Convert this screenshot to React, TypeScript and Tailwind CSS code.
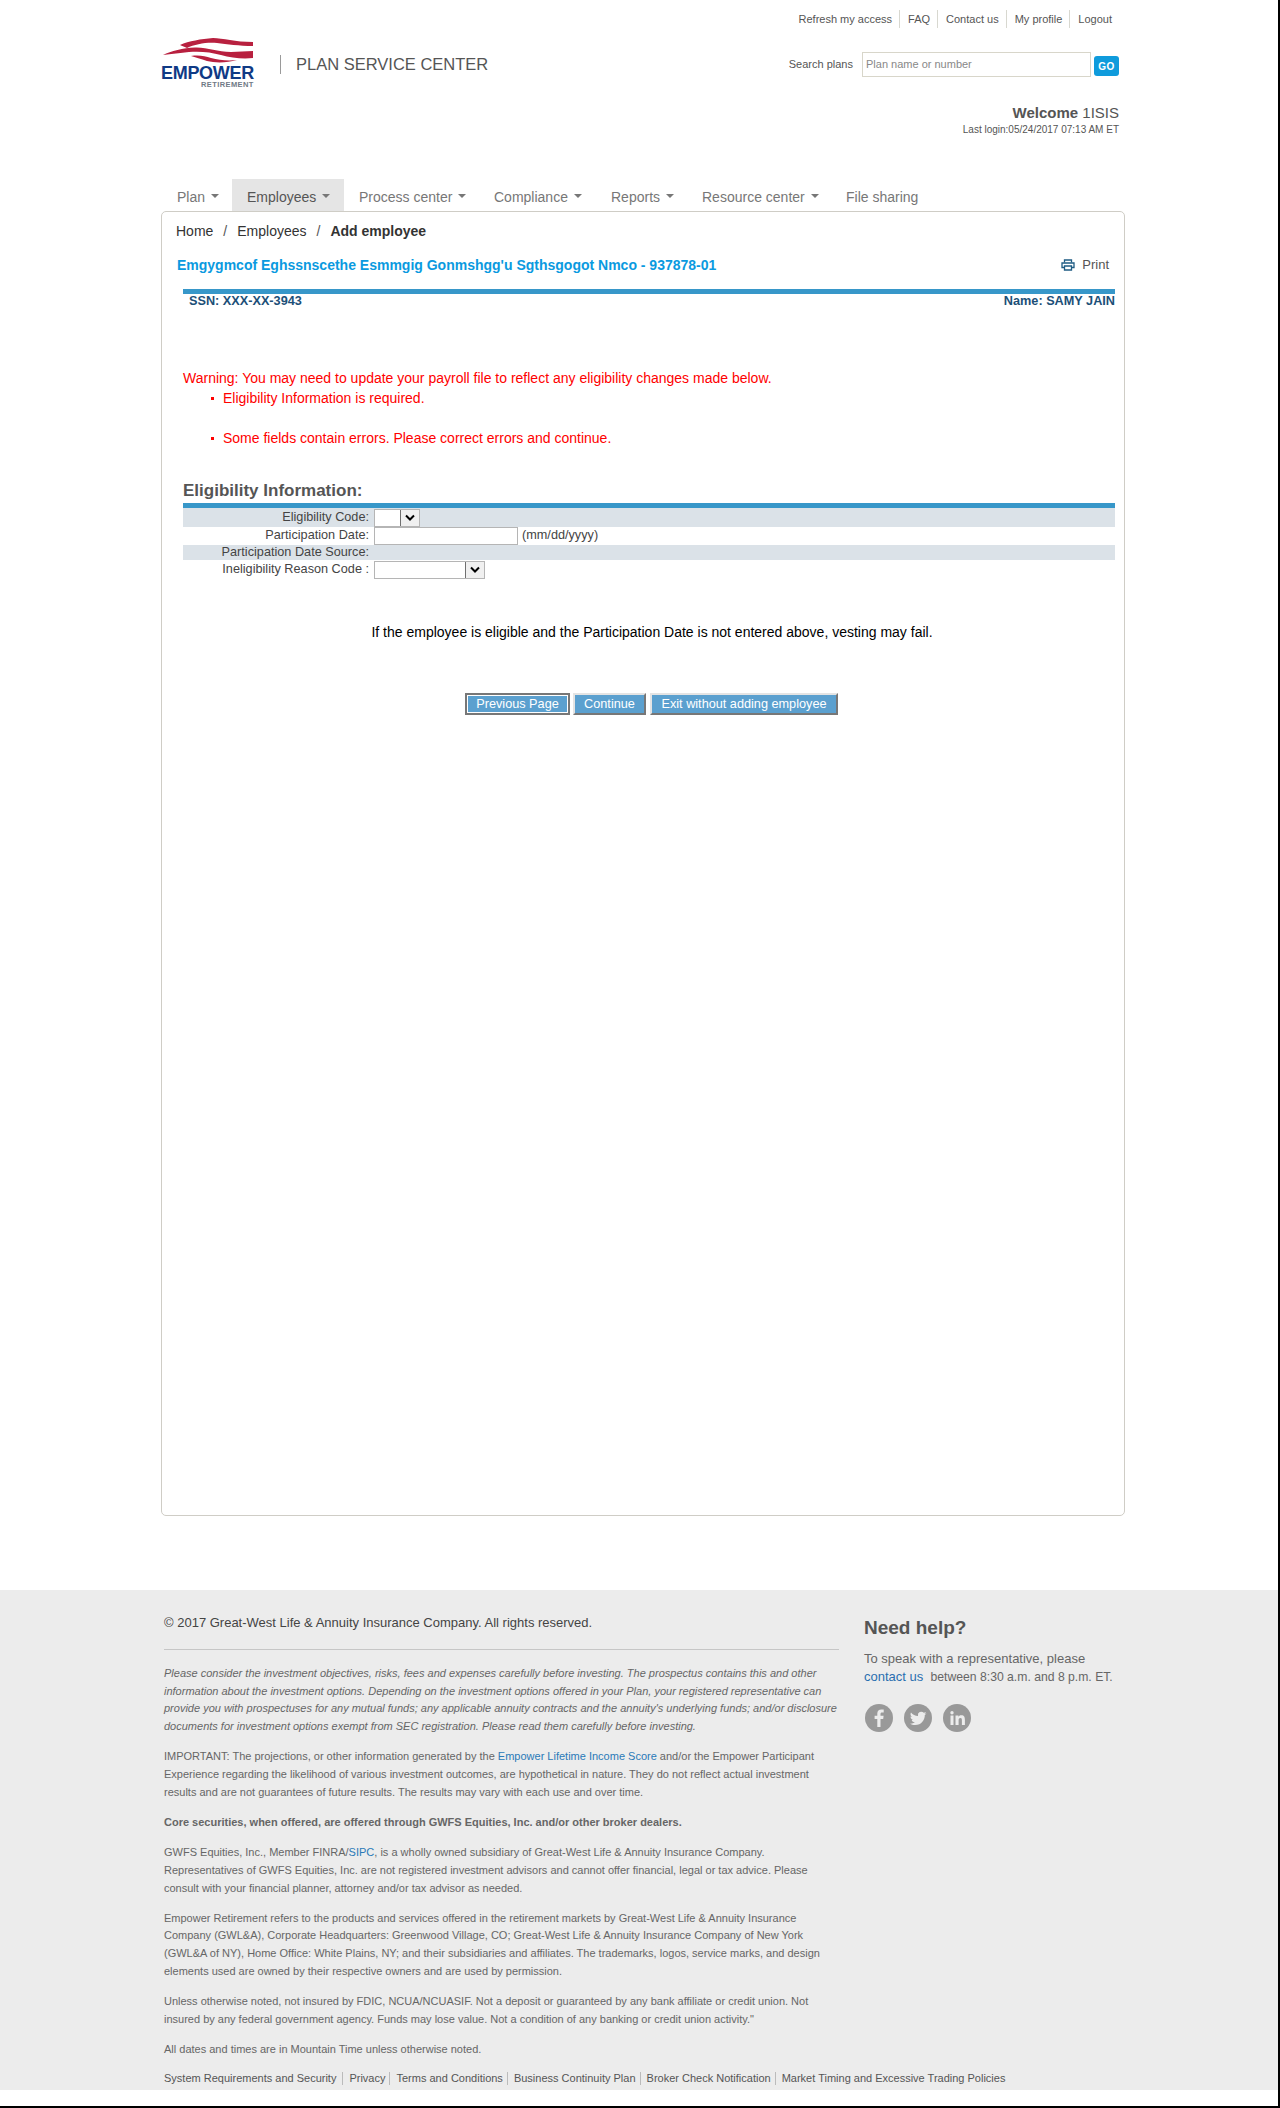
const nav = [
  { label: "Plan", caret: true, w: "w-[70px]" },
  { label: "Employees", caret: true, w: "w-[112px]", active: true },
  { label: "Process center", caret: true, w: "w-[135px]" },
  { label: "Compliance", caret: true, w: "w-[117px]" },
  { label: "Reports", caret: true, w: "w-[91px]" },
  { label: "Resource center", caret: true, w: "w-[144px]" },
  { label: "File sharing", caret: false, w: "w-[100px]" },
];

const footerLinks = [
  "Privacy",
  "Terms and Conditions",
  "Business Continuity Plan",
  "Broker Check Notification",
  "Market Timing and Excessive Trading Policies",
];

const Logo = () => (
  <div className="relative w-[100px] h-[52px] shrink-0">
    <svg width="100" height="26" viewBox="0 0 100 26" className="absolute left-0 top-0">
      <path d="M19 7 C28 3 40 1 52 0 C62 0 74 4 92 4 L92 8 C78 8 66 6 56 5 C46 4 34 6 26 10 C24 9 21 8 19 7 Z" fill="#b8203f" />
      <path d="M2 17 C10 13 22 10 34 9.500 C46 9 56 14 70 14 L92 13 L92 20 C82 21 70 20 60 17 C50 14 38 13 28 14 C20 15 10 16 2 17 Z" fill="#b8203f" />
      <path d="M30 18 C38 17 44 18 50 20 C58 22 66 23 76 22 C66 25 54 25 46 23 C40 21 34 19 30 18 Z" fill="#b8203f" />
    </svg>
    <div className="absolute left-0 top-[25px] text-[#0f3a85] text-[18px] leading-[20px] font-bold tracking-[-0.3px]">
      EMPOWER
    </div>
    <div className="absolute left-[40px] top-[42px] text-[#6f7a86] text-[7.500px] leading-[9px] font-bold tracking-[0.4px] whitespace-nowrap">
      RETIREMENT
    </div>
  </div>
);

const PrinterIcon = () => (
  <svg width="14" height="12" viewBox="0 0 14 12" fill="none" stroke="#1f5c84" strokeWidth="1.3">
    <path d="M3.5 3.500V1h7v2.500" />
    <path d="M3 8.500H1V4h12v4.500h-2" />
    <path d="M3.500 7h7v4h-7z" />
  </svg>
);

const Arrow = () => (
  <svg width="12" height="8" viewBox="0 0 12 8" fill="none" stroke="#000" strokeWidth="2">
    <path d="M2 1.500l4 4 4-4" />
  </svg>
);

const Select = ({ w }: { w: string }) => (
  <div className={`${w} h-[18px] border border-[#b5b5b5] bg-white flex justify-end`}>
    <div className="w-[19px] h-[16px] bg-[#f0f0f0] border-l border-[#707070] flex items-center justify-center">
      <Arrow />
    </div>
  </div>
);

const Social = ({ d }: { d: string }) => (
  <svg width="28" height="28" viewBox="0 0 28 28">
    <circle cx="14" cy="14" r="14" fill="#999999" />
    <path d={d} fill="#ececec" />
  </svg>
);

const btn =
  "h-[22px] bg-[#5ba0cf] text-white text-[12.700px] leading-[18px] border-2 text-center";
const btnPlain = "border-t-[#e4e4e4] border-l-[#e4e4e4] border-r-[#777777] border-b-[#777777]";

export default function App() {
  return (
    <div className="h-[2108px] flex flex-col bg-white border-r-2 border-b-2 border-black text-[#555555] font-['Liberation_Sans',Arial,sans-serif]">
      <div className="h-[1590px] w-[964px] ml-[161px] shrink-0">
        <header className="h-[179px]">
          <div className="flex justify-end pt-[10px] pr-[13px] text-[11px] leading-[18px] text-[#555555]">
            <span className="pr-[7px]">Refresh my access</span>
            <span className="border-l border-[#d8d8d0] pl-[8px] pr-[7px]">FAQ</span>
            <span className="border-l border-[#d8d8d0] pl-[8px] pr-[7px]">Contact us</span>
            <span className="border-l border-[#d8d8d0] pl-[8px] pr-[7px]">My profile</span>
            <span className="border-l border-[#d8d8d0] pl-[8px]">Logout</span>
          </div>
          <div className="flex items-center mt-[10px] h-[52px]">
            <Logo />
            <div className="border-l border-[#9a9a9a] h-[19px] ml-[19px] pl-[15px] text-[16.500px] leading-[19px] text-[#555555] whitespace-nowrap">
              PLAN SERVICE CENTER
            </div>
            <div className="ml-auto flex items-center pr-[6px]">
              <span className="text-[11px] mr-[9px]">Search plans</span>
              <input
                placeholder="Plan name or number"
                className="w-[229px] h-[25px] border border-[#d8d6ca] px-[3px] text-[11px] placeholder:text-[#888888] outline-none"
              />
              <div className="ml-[3px] mt-[4px] w-[25px] h-[20px] rounded-[3px] bg-[#0f9bdc] text-white text-[10px] font-bold tracking-[0.5px] flex items-center justify-center">
                GO
              </div>
            </div>
          </div>
          <div className="text-right pr-[6px] mt-[14px]">
            <div className="text-[15px] leading-[18px]">
              <b>Welcome</b> 1ISIS
            </div>
            <div className="text-[10px] leading-[14px] mt-[1px]">Last login:05/24/2017 07:13 AM ET</div>
          </div>
        </header>

        <nav className="flex ml-[1px] h-[32px] text-[14px] text-[#777777]">
          {nav.map((n) => (
            <div
              key={n.label}
              className={`${n.w} h-[32px] flex items-center pl-[15px] pt-[4px] whitespace-nowrap ${n.active ? "bg-[#e5e5e5] text-[#555555]" : ""}`}
            >
              {n.label}
              {n.caret && (
                <span className="ml-[6px] mb-[3px] border-x-[4px] border-x-transparent border-t-[4px] border-t-[#777777]" />
              )}
            </div>
          ))}
        </nav>

        <main className="h-[1305px] border border-[#cfcdc6] rounded-[5px] w-[964px]">
          <div className="pl-[14px] pt-[10px] text-[14px] leading-[18px] text-[#333333]">
            Home<span className="mx-[10px] text-[#555555]">/</span>Employees
            <span className="mx-[10px] text-[#555555]">/</span>
            <b>Add employee</b>
          </div>
          <div className="flex justify-between px-[15px] mt-[16px] h-[18px] items-center">
            <b className="text-[14px] text-[#0a9ae0]">
              Emgygmcof Eghssnscethe Esmmgig Gonmshgg'u Sgthsgogot Nmco - 937878-01
            </b>
            <span className="flex items-center gap-[7px] text-[13px] text-[#555555]">
              <PrinterIcon />
              Print
            </span>
          </div>
          <div className="ml-[21px] w-[932px]">
            <div className="mt-[15px] h-[5px] bg-[#3797c9]" />
            <div className="flex justify-between pl-[6px] text-[12.700px] leading-[14px] font-bold text-[#1c4f78]">
              <span>SSN: XXX-XX-3943</span>
              <span>Name: SAMY JAIN</span>
            </div>
            <div className="mt-[60px] text-[14px] leading-[20px] text-[#ff0000]">
              <div>Warning: You may need to update your payroll file to reflect any eligibility changes made below.</div>
              <div className="pl-[28px] flex items-center gap-[9px]">
                <span className="w-[3px] h-[3px] bg-[#ff0000]" />
                Eligibility Information is required.
              </div>
              <div className="h-[20px]" />
              <div className="pl-[28px] flex items-center gap-[9px]">
                <span className="w-[3px] h-[3px] bg-[#ff0000]" />
                Some fields contain errors. Please correct errors and continue.
              </div>
            </div>
            <div className="mt-[32px] text-[17px] leading-[22px] font-bold text-[#555555]">Eligibility Information:</div>
            <div className="mt-[1px] h-[5px] bg-[#3797c9]" />
            <div className="text-[12.700px] text-[#444444]">
              <div className="h-[19px] bg-[#dbe2e8] flex items-center">
                <div className="w-[186px] text-right">Eligibility Code:</div>
                <div className="ml-[5px]"><Select w="w-[46px]" /></div>
              </div>
              <div className="h-[18px] flex items-center">
                <div className="w-[186px] text-right">Participation Date:</div>
                <div className="ml-[5px] w-[144px] h-[18px] border border-[#b5b5b5]" />
                <span className="ml-[4px]">(mm/dd/yyyy)</span>
              </div>
              <div className="h-[15px] bg-[#dbe2e8] flex items-center">
                <div className="w-[186px] text-right">Participation Date Source:</div>
              </div>
              <div className="h-[19px] flex items-center">
                <div className="w-[186px] text-right">Ineligibility Reason Code :</div>
                <div className="ml-[5px]"><Select w="w-[111px]" /></div>
              </div>
            </div>
            <div className="mt-[43px] text-[14px] leading-[20px] text-black text-center pl-[6px]">
              If the employee is eligible and the Participation Date is not entered above, vesting may fail.
            </div>
            <div className="mt-[51px] flex justify-center pl-[5px]">
              <div className={`${btn} border-[#777777] shadow-[inset_0_0_0_1px_#ffffff] w-[105px]`}>Previous Page</div>
              <div className={`${btn} ${btnPlain} ml-[3px] w-[73px]`}>Continue</div>
              <div className={`${btn} ${btnPlain} ml-[4px] w-[188px]`}>Exit without adding employee</div>
            </div>
          </div>
        </main>
      </div>

      <footer className="h-[500px] shrink-0 bg-[#ececec] pl-[164px] flex">
        <div className="w-[675px]">
          <div className="pt-[24px] text-[13px] leading-[18px] text-[#444444]">
            © 2017 Great-West Life & Annuity Insurance Company. All rights reserved.
          </div>
          <div className="mt-[17px] h-px bg-[#c6c6c6]" />
          <div className="mt-[15px] text-[11px] leading-[17.700px] text-[#666666] w-[680px]">
            <p className="italic">
              Please consider the investment objectives, risks, fees and expenses carefully before investing. The
              prospectus contains this and other information about the investment options. Depending on the investment
              options offered in your Plan, your registered representative can provide you with prospectuses for any
              mutual funds; any applicable annuity contracts and the annuity's underlying funds; and/or disclosure
              documents for investment options exempt from SEC registration. Please read them carefully before
              investing.
            </p>
            <p className="mt-[12.500px]">
              IMPORTANT: The projections, or other information generated by the{" "}
              <span className="text-[#2a7ab8]">Empower Lifetime Income Score</span> and/or the Empower Participant
              Experience regarding the likelihood of various investment outcomes, are hypothetical in nature. They do
              not reflect actual investment results and are not guarantees of future results. The results may vary with
              each use and over time.
            </p>
            <p className="mt-[12.500px] font-bold">
              Core securities, when offered, are offered through GWFS Equities, Inc. and/or other broker dealers.
            </p>
            <p className="mt-[12.500px]">
              GWFS Equities, Inc., Member FINRA/<span className="text-[#2a7ab8]">SIPC</span>, is a wholly owned
              subsidiary of Great-West Life & Annuity Insurance Company. Representatives of GWFS Equities, Inc. are not
              registered investment advisors and cannot offer financial, legal or tax advice. Please consult with your
              financial planner, attorney and/or tax advisor as needed.
            </p>
            <p className="mt-[12.500px]">
              Empower Retirement refers to the products and services offered in the retirement markets by Great-West
              Life & Annuity Insurance Company (GWL&A), Corporate Headquarters: Greenwood Village, CO; Great-West Life &
              Annuity Insurance Company of New York (GWL&A of NY), Home Office: White Plains, NY; and their subsidiaries
              and affiliates. The trademarks, logos, service marks, and design elements used are owned by their
              respective owners and are used by permission.
            </p>
            <p className="mt-[12.500px]">
              Unless otherwise noted, not insured by FDIC, NCUA/NCUASIF. Not a deposit or guaranteed by any bank
              affiliate or credit union. Not insured by any federal government agency. Funds may lose value. Not a
              condition of any banking or credit union activity."
            </p>
            <p className="mt-[12.500px]">All dates and times are in Mountain Time unless otherwise noted.</p>
            <div className="mt-[11px] flex whitespace-nowrap text-[#555555]">
              <span className="pr-[6px]">System Requirements and Security</span>
              {footerLinks.map((l) => (
                <span key={l} className="border-l border-[#bbbbbb] pl-[6px] pr-[4px] leading-[13px] my-[2px]">
                  {l}
                </span>
              ))}
            </div>
          </div>
        </div>
        <div className="ml-[25px] pt-[28px] w-[260px]">
          <div className="text-[19px] leading-[20px] font-bold text-[#555555]">Need help?</div>
          <div className="mt-[12px] text-[13px] leading-[18px] text-[#666666] whitespace-nowrap">
            To speak with a representative, please
            <br />
            <span className="text-[#2a6fb0]">contact us</span>&nbsp; <span className="text-[12.200px]">between 8:30 a.m. and 8 p.m. ET.</span>
          </div>
          <div className="mt-[18px] ml-[1px] flex gap-[11px]">
            <Social d="M15.5 23v-8h2.7l.4-3.2h-3.1V9.9c0-.9.3-1.5 1.6-1.5h1.6V5.6c-.3 0-1.3-.1-2.4-.1-2.4 0-4 1.400-4 4.100v2.200H9.600V15h2.700v8z" />
            <Social d="M22.5 9.300c-.6.3-1.3.5-2 .6.7-.4 1.3-1.100 1.500-1.900-.7.4-1.400.7-2.200.8a3.400 3.400 0 0 0-5.800 3.100c-2.800-.1-5.300-1.500-7-3.500-.9 1.600-.5 3.500 1 4.500-.5 0-1-.2-1.500-.4 0 1.600 1.200 3 2.700 3.300-.5.1-1 .2-1.500.1.400 1.300 1.700 2.300 3.200 2.300a6.800 6.800 0 0 1-5 1.400c1.500 1 3.300 1.500 5.200 1.500 6.300 0 9.900-5.300 9.700-10.100.7-.5 1.300-1.100 1.700-1.700z" />
            <Social d="M7.500 11.500h3V21h-3zM9 7a1.700 1.700 0 1 1 0 3.400A1.700 1.700 0 0 1 9 7zM12.500 11.500h2.900v1.300c.4-.8 1.400-1.500 2.900-1.500 3 0 3.600 2 3.600 4.600V21h-3v-4.600c0-1.100 0-2.500-1.500-2.500s-1.800 1.200-1.800 2.400V21h-3.100z" />
          </div>
        </div>
      </footer>
    </div>
  );
}
